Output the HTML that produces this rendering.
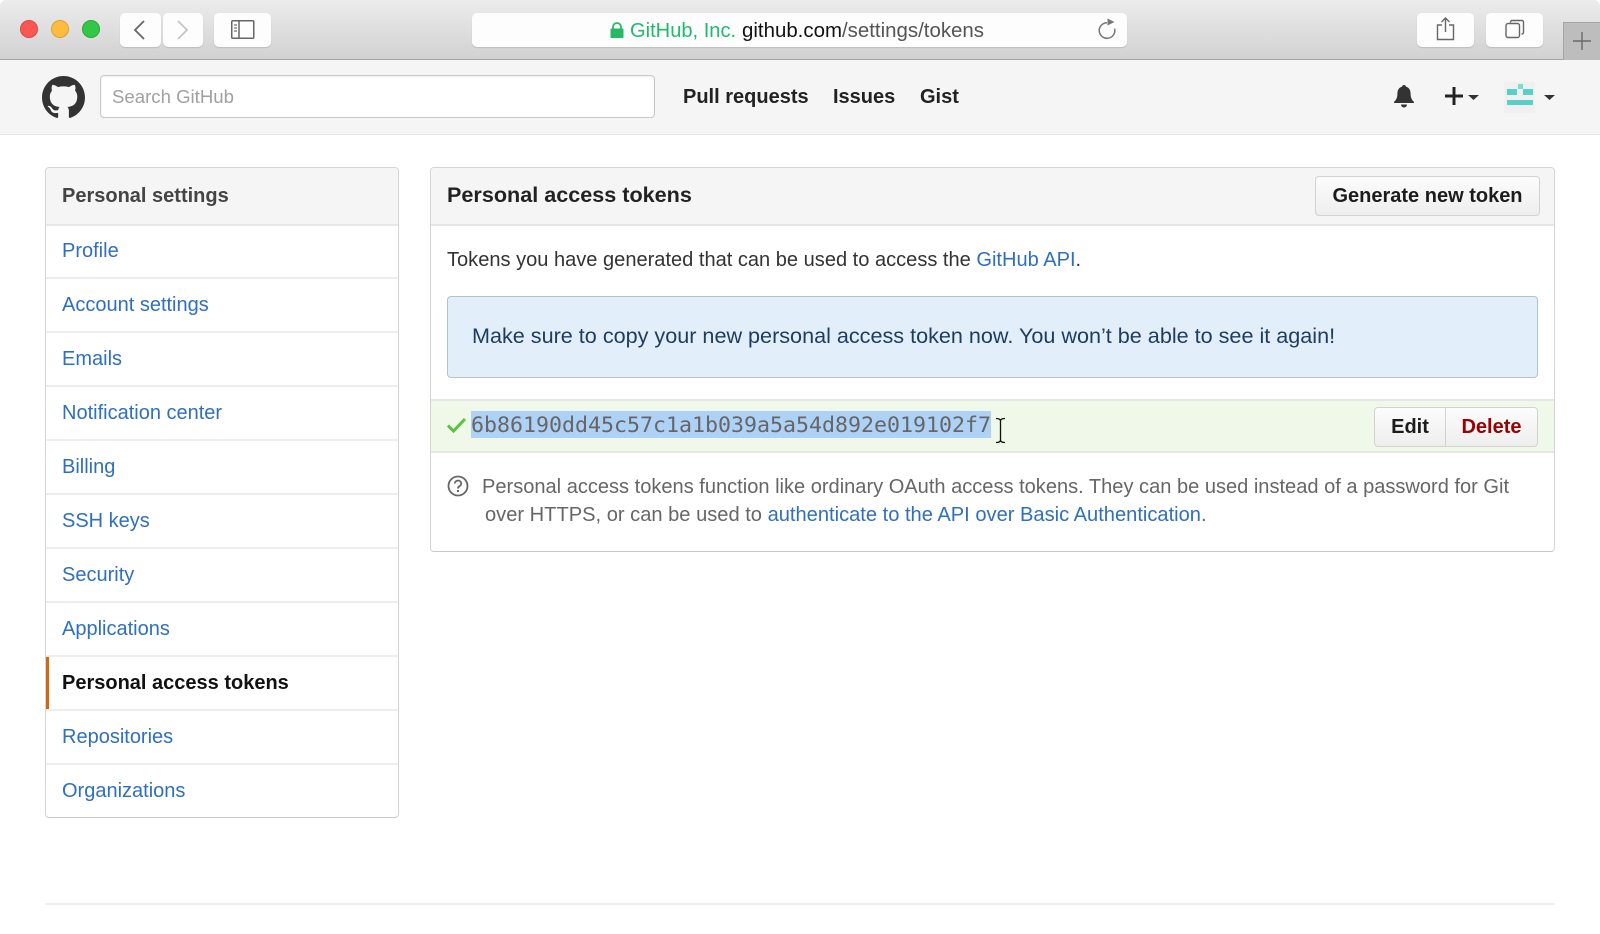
<!DOCTYPE html>
<html><head><meta charset="utf-8"><title>Personal access tokens</title>
<style>
html,body{margin:0;padding:0;background:#fff}
body{width:1600px;height:934px;position:relative;overflow:hidden;font-family:"Liberation Sans",Arial,sans-serif;color:#333;font-size:20.06px;filter:blur(.35px)}
div,a,span.t,svg{position:absolute}
.t{white-space:nowrap;line-height:28px;height:28px}
a{color:#2f6fc0;text-decoration:none}
.b{font-weight:700;font-size:20px}
.tb{background:#fdfdfd;border-radius:5px;box-shadow:0 1px 1px rgba(0,0,0,.12)}
.light{border-radius:50%;width:18px;height:18px;top:20px}
.panel{border:1px solid #d4d4d4;border-bottom-color:#c8c8c8;border-radius:4px;box-sizing:border-box;background:#fff}
.hl{height:2px;background:#eee;left:46px;width:352px}
.sl{left:62px;font-size:20px}
.btn{box-sizing:border-box;border:1px solid #d2d2d2;background:linear-gradient(#fcfcfc,#eee);font-weight:700;font-size:20px;color:#1c1c1c;text-align:center;line-height:38px}
</style></head>
<body>
<!-- browser toolbar -->
<div style="left:0;top:0;width:1600px;height:60px;background:linear-gradient(#ececec,#d1d1d1);border-bottom:1px solid #a6a6a6;box-sizing:border-box;border-radius:6px 6px 0 0"></div>
<div class="light" style="left:20px;background:#fc5753;border:.5px solid #df4744;box-sizing:border-box"></div>
<div class="light" style="left:51px;background:#fdbc40;border:.5px solid #de9f34;box-sizing:border-box"></div>
<div class="light" style="left:82px;background:#33c748;border:.5px solid #27aa35;box-sizing:border-box"></div>
<div class="tb" style="left:120px;top:13px;width:41px;height:34px"></div>
<svg style="left:120px;top:13px" width="41" height="34" fill="none" stroke="#666" stroke-width="1.8"><path d="M24 8 L15 17 L24 26"/></svg>
<div class="tb" style="left:162.5px;top:13px;width:40px;height:34px"></div>
<svg style="left:162px;top:13px" width="41" height="34" fill="none" stroke="#c4c4c4" stroke-width="1.8"><path d="M16 8 L25 17 L16 26"/></svg>
<div class="tb" style="left:214px;top:13px;width:57px;height:34px"></div>
<svg style="left:231px;top:20px" width="24" height="20" fill="none" stroke="#666" stroke-width="1.5"><rect x=".75" y=".75" width="22" height="17.5" rx="1"/><path d="M8 1V18"/><path d="M3 5h3M3 8h3M3 11h3" stroke="#888"/></svg>
<div class="tb" style="left:472px;top:13px;width:655px;height:34px"></div>
<svg style="left:610px;top:22px" width="14" height="16"><path d="M3 7V5a4 4 0 0 1 8 0V7" fill="none" stroke="#27b866" stroke-width="1.8"/><rect x="0.5" y="6.5" width="13" height="9.5" rx="1" fill="#27b866"/></svg>
<span class="t" style="left:630px;top:17px;font-size:20.1px;color:#1fbb6c">GitHub, Inc.</span>
<span class="t" style="left:742px;top:17px;font-size:20.45px;color:#111">github.com<span style="color:#555">/settings/tokens</span></span>
<svg style="left:1096px;top:17px" width="24" height="24" fill="none" stroke="#777" stroke-width="1.5"><path d="M11 5.7A7.8 7.8 0 1 0 18.6 11.6"/><path d="M11.5 1.5L18.5 5L11.500 8.5Z" fill="#777" stroke="none"/></svg>
<div class="tb" style="left:1416.5px;top:13px;width:57px;height:34px"></div>
<svg style="left:1434.5px;top:16px" width="22" height="26" fill="none" stroke="#666" stroke-width="1.4"><path d="M7 9H2.5V23.5H18.5V9H14"/><path d="M10.5 16V2M6.5 6L10.5 2L14.5 6"/></svg>
<div class="tb" style="left:1486px;top:13px;width:57px;height:34px"></div>
<svg style="left:1505px;top:19px" width="22" height="22" fill="none" stroke="#666" stroke-width="1.4"><rect x="1" y="4.5" width="13.5" height="14" rx="2"/><path d="M5.5 3.5V3a1.5 1.5 0 0 1 1.5-1.5h10a1.5 1.5 0 0 1 1.5 1.5v10.5a1.5 1.5 0 0 1-1.5 1.5h-.5"/></svg>
<div style="left:1563px;top:22px;width:37px;height:38px;background:#bdbdbd;border-top:1px solid #a5a5a5;border-left:1px solid #a5a5a5;box-sizing:border-box"></div>
<svg style="left:1572px;top:31px" width="20" height="20" stroke="#6a6a6a" stroke-width="1.4"><path d="M1 10H19M10 1V19"/></svg>

<!-- GitHub nav -->
<div style="left:0;top:60px;width:1600px;height:75px;background:#f5f5f5;border-bottom:1px solid #e5e5e5;box-sizing:border-box"></div>
<svg style="left:42px;top:76px" width="43" height="43" viewBox="0 0 16 16" fill="#333"><path d="M8 0C3.58 0 0 3.58 0 8c0 3.54 2.29 6.53 5.47 7.59.4.07.55-.17.55-.38 0-.19-.01-.82-.01-1.49-2.01.37-2.53-.49-2.69-.94-.09-.23-.48-.94-.82-1.13-.28-.15-.68-.52-.01-.53.63-.01 1.08.58 1.23.82.72 1.21 1.87.87 2.33.66.07-.52.28-.87.51-1.07-1.78-.2-3.64-.89-3.64-3.95 0-.87.31-1.59.82-2.15-.08-.2-.36-1.02.08-2.12 0 0 .67-.21 2.2.82.64-.18 1.32-.27 2-.27.68 0 1.36.09 2 .27 1.53-1.04 2.2-.82 2.2-.82.44 1.1.16 1.92.08 2.12.51.56.82 1.27.82 2.15 0 3.07-1.87 3.75-3.65 3.95.29.25.54.73.54 1.48 0 1.07-.01 1.93-.01 2.2 0 .21.15.46.55.38A8.013 8.013 0 0016 8c0-4.42-3.58-8-8-8z"/></svg>
<div style="left:100px;top:75px;width:555px;height:43px;background:#fff;border:1px solid #c8c8c8;border-radius:4px;box-sizing:border-box;box-shadow:inset 0 1px 2px rgba(0,0,0,.07)"></div>
<span class="t" style="left:112px;top:83px;color:#a0a0a0;font-size:18.6px">Search GitHub</span>
<span class="t b" style="left:683px;top:83px;color:#222">Pull requests</span>
<span class="t b" style="left:833px;top:83px;color:#222">Issues</span>
<span class="t b" style="left:920px;top:83px;color:#222">Gist</span>
<svg style="left:1393px;top:84px" width="22" height="25" fill="#333"><path d="M11 1c1.2 0 1.8.8 2 1.6 3.2 1 4.6 3.6 4.6 7 0 3.8 1 6 3.4 8.4v1H1v-1C3.4 15.6 4.4 13.4 4.4 9.6c0-3.4 1.4-6 4.6-7C9.2 1.8 9.8 1 11 1z"/><path d="M8 20.5h6a3 3 0 0 1-6 0z"/></svg>
<svg style="left:1445px;top:87px" width="18" height="18" stroke="#222" stroke-width="3"><path d="M0 9H18M9 0V18"/></svg>
<svg style="left:1468px;top:95px" width="11" height="5" fill="#333"><path d="M0 0H11L5.5 5Z"/></svg>
<div style="left:1504px;top:82px;width:31px;height:31px;background:#f0f0f0;border-radius:2px"></div>
<div style="left:1507px;top:89px;width:10px;height:6px;background:#56d0c8"></div>
<div style="left:1523px;top:89px;width:10px;height:6px;background:#56d0c8"></div>
<div style="left:1518px;top:84px;width:5px;height:5px;background:#7bdcd6"></div>
<div style="left:1507px;top:100px;width:26px;height:5px;background:#56d0c8"></div>
<svg style="left:1543.5px;top:95px" width="11" height="5" fill="#333"><path d="M0 0H11L5.5 5Z"/></svg>

<!-- sidebar -->
<div class="panel" style="left:45px;top:167px;width:354px;height:651px"></div>
<div style="left:46px;top:168px;width:352px;height:56px;background:#f5f5f5;border-radius:3px 3px 0 0"></div>
<div class="hl" style="top:224px;background:#e8e8e8"></div>
<span class="t b" style="left:62px;top:182px;color:#444">Personal settings</span>
<a class="t sl" style="top:237px">Profile</a><div class="hl" style="top:277px"></div>
<a class="t sl" style="top:291px">Account settings</a><div class="hl" style="top:331px"></div>
<a class="t sl" style="top:345px">Emails</a><div class="hl" style="top:385px"></div>
<a class="t sl" style="top:399px">Notification center</a><div class="hl" style="top:439px"></div>
<a class="t sl" style="top:453px">Billing</a><div class="hl" style="top:493px"></div>
<a class="t sl" style="top:507px">SSH keys</a><div class="hl" style="top:547px"></div>
<a class="t sl" style="top:561px">Security</a><div class="hl" style="top:601px"></div>
<a class="t sl" style="top:615px">Applications</a><div class="hl" style="top:655px"></div>
<div style="left:46px;top:657px;width:3px;height:52px;background:#d26911"></div>
<span class="t b sl" style="top:669px;color:#111">Personal access tokens</span><div class="hl" style="top:709px"></div>
<a class="t sl" style="top:723px">Repositories</a><div class="hl" style="top:763px"></div>
<a class="t sl" style="top:777px">Organizations</a>

<!-- main panel -->
<div class="panel" style="left:430px;top:167px;width:1125px;height:385px"></div>
<div style="left:431px;top:168px;width:1123px;height:56px;background:#f5f5f5;border-radius:3px 3px 0 0"></div>
<div style="left:431px;top:224px;width:1123px;height:2px;background:#e6e6e6"></div>
<span class="t b" style="left:447px;top:181px;color:#222;font-size:21.6px">Personal access tokens</span>
<div class="btn" style="left:1315px;top:176px;width:225px;height:40px;border-radius:4px">Generate new token</div>
<span class="t" style="left:447px;top:246px">Tokens you have generated that can be used to access the <a style="position:static">GitHub API</a>.</span>
<div style="left:447px;top:296px;width:1091px;height:82px;background:#e2eef9;border:1px solid #b4c1cf;border-radius:4px;box-sizing:border-box"></div>
<span class="t" style="left:472px;top:322px;color:#1d3d5e;font-size:21.6px">Make sure to copy your new personal access token now. You won’t be able to see it again!</span>
<div style="left:431px;top:399px;width:1123px;height:54px;background:#f0f8ea;border-top:2px solid #e6e6e6;border-bottom:2px solid #e6e6e6;box-sizing:border-box"></div>
<svg style="left:447px;top:417px" width="19" height="16" fill="none" stroke="#55c53a" stroke-width="3"><path d="M1 8.5L6.5 14L18 2"/></svg>
<span class="t" style="left:471px;top:411px;height:27px;line-height:30px;overflow:hidden;font-family:'DejaVu Sans Mono',monospace;font-size:21.6px;color:#666;background:#add2f5">6b86190dd45c57c1a1b039a5a54d892e019102f7</span>
<svg style="left:994px;top:417px" width="13" height="27" fill="none" stroke="#111" stroke-width="1.3"><path d="M2 1.5C4.5 1.5 6.5 2 6.5 4V23C6.5 25 4.5 25.5 2 25.5M11 1.5C8.500 1.5 6.5 2 6.5 4M11 25.5C8.5 25.5 6.5 25 6.5 23"/></svg>
<div class="btn" style="left:1374px;top:407px;width:72px;height:40px;border-radius:4px 0 0 4px">Edit</div>
<div class="btn" style="left:1445px;top:407px;width:93px;height:40px;border-radius:0 4px 4px 0;color:#900">Delete</div>
<svg style="left:446.500px;top:475px" width="22" height="22" fill="none" stroke="#666" stroke-width="1.8"><circle cx="11" cy="11" r="9.5"/><path d="M7.8 8.5a3.2 3 0 1 1 4.7 2.7c-1 .6-1.5 1-1.500 2.300"/><path d="M11 15v2" stroke-width="2"/></svg>
<span class="t" style="left:482px;top:473px;color:#666">Personal access tokens function like ordinary OAuth access tokens. They can be used instead of a password for Git</span>
<span class="t" style="left:485px;top:501px;color:#666;font-size:20.1px">over HTTPS, or can be used to <a style="position:static">authenticate to the API over Basic Authentication</a>.</span>

<!-- footer rule -->
<div style="left:45px;top:903px;width:1510px;height:2px;background:#f0f0f0"></div>
</body></html>
